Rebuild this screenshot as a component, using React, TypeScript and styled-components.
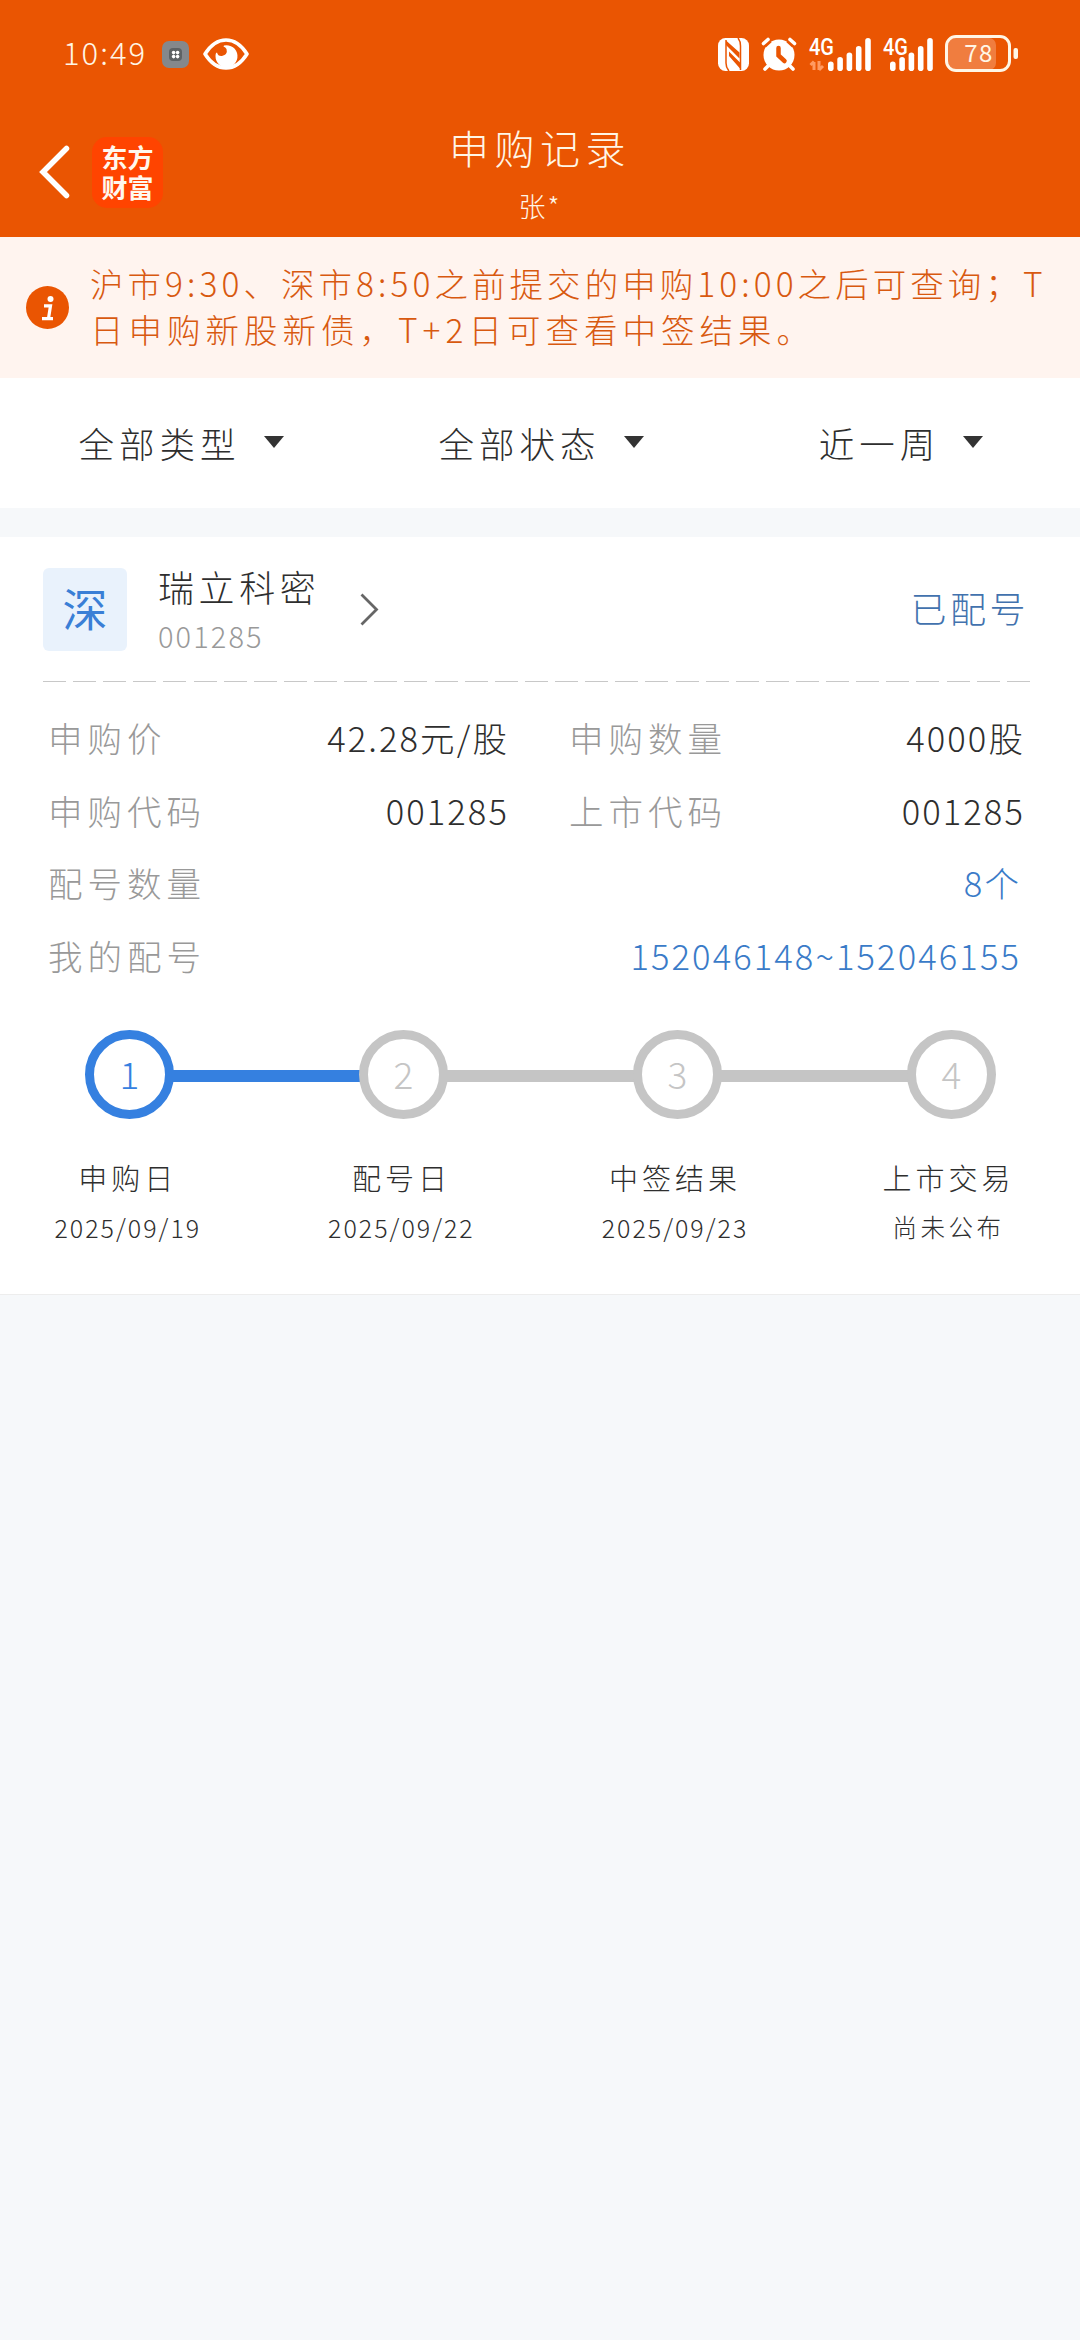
import React from 'react';
import styled, { createGlobalStyle } from 'styled-components';

const ORANGE = '#ea5502';
const BLUE = '#3580e0';
const GREY = '#c5c5c5';

const GlobalStyle = createGlobalStyle`
  * { box-sizing: border-box; }
  body {
    margin: 0;
    background: #f6f8fa;
    color: #2e2e2e;
    font-family: "Noto Sans CJK SC", "Noto Sans", sans-serif;
    font-weight: 300;
  }
`;

const Screen = styled.main`
  width: 1080px;
  min-height: 2340px;
  background: #f6f8fa;
`;

const Header = styled.header`
  height: 237px;
  background: ${ORANGE};
  color: #fff6e6;
`;

const StatusBar = styled.div`
  display: flex;
  justify-content: space-between;
  align-items: center;
  height: 108px;
  padding: 0 61px 0 63px;
`;

const StatusGroup = styled.div`
  display: flex;
  align-items: center;
`;

const Clock = styled.span`
  width: 99px;
  padding-bottom: 4px;
  font-size: 31px;
  line-height: 36px;
  letter-spacing: 2px;
`;

const Gap = styled.span<{ $w: number }>`
  width: ${p => p.$w}px;
`;

const TitleBar = styled.div`
  display: grid;
  grid-template-columns: 300px 1fr 300px;
  height: 129px;
`;

const NavGroup = styled.div`
  display: flex;
  align-items: center;
  gap: 22px;
  height: 128px;
  padding-left: 39px;
`;

const Logo = styled.div`
  display: flex;
  flex-direction: column;
  align-items: center;
  justify-content: center;
  width: 71px;
  height: 71px;
  border-radius: 15px;
  background: #ff4400;
  color: #fff8ee;
  font-size: 26px;
  font-weight: 700;
  line-height: 30px;
`;

const TitleBlock = styled.div`
  display: flex;
  flex-direction: column;
  align-items: center;
  padding-top: 13px;
`;

const Title = styled.h1`
  margin: 0;
  font-size: 40px;
  font-weight: 300;
  line-height: 52px;
  letter-spacing: 5.5px;
`;

const Holder = styled.span`
  margin-top: 11px;
  font-size: 27px;
  line-height: 44px;
  letter-spacing: 2px;
`;

const Notice = styled.section`
  display: flex;
  align-items: center;
  gap: 21px;
  height: 141px;
  padding: 0 20px 0 26px;
  background: #fff4ef;
  color: #d8590f;
`;

const NoticeText = styled.p`
  margin: 0;
  padding-bottom: 3px;
  font-size: 33.5px;
  line-height: 46px;
  white-space: nowrap;
`;

const NoticeLine = styled.span<{ $spacing: number }>`
  display: block;
  letter-spacing: ${p => p.$spacing}px;
`;

const Filters = styled.nav`
  display: grid;
  grid-template-columns: repeat(3, 1fr);
  height: 130px;
  margin-bottom: 29px;
  background: #fff;
`;

const Filter = styled.div`
  display: flex;
  align-items: center;
  justify-content: center;
  gap: 23px;
  padding: 0 0 2px 2px;
  font-size: 35.5px;
  letter-spacing: 5px;
`;

const Caret = styled.span`
  border: 10px solid transparent;
  border-top: 12px solid #333;
  border-bottom: 0;
`;

const Card = styled.section`
  height: 758px;
  padding: 31px 51px 0 43px;
  border-bottom: 1px solid #ededed;
  background: #fff;
`;

const Stock = styled.div`
  display: flex;
  align-items: center;
  height: 83px;
`;

const Market = styled.div`
  display: flex;
  align-items: center;
  justify-content: center;
  width: 84px;
  height: 83px;
  margin-right: 31px;
  padding-bottom: 4px;
  border-radius: 6px;
  background: #e9f2fc;
  color: #3a7fd6;
  font-size: 45px;
  font-weight: 400;
  line-height: 60px;
`;

const StockName = styled.div`
  display: flex;
  flex-direction: column;
  width: 202px;
  font-size: 36px;
  line-height: 50px;
  letter-spacing: 4.6px;
`;

const StockCode = styled.span`
  color: #999;
  font-size: 29px;
  line-height: 48px;
  letter-spacing: 2.1px;
`;

const Allotted = styled.span`
  margin-left: auto;
  padding-bottom: 6px;
  color: #4272ae;
  font-size: 36px;
  letter-spacing: 3.5px;
`;

const Divider = styled.div`
  width: 987px;
  height: 1px;
  margin-top: 30px;
  background: repeating-linear-gradient(90deg, #c8c8c8 0 23px, transparent 23px 30.12px);
`;

const Details = styled.div`
  display: grid;
  grid-template-columns: 459px 454px;
  grid-auto-rows: 72.6px;
  column-gap: 62px;
  padding: 19px 0 0 5px;
  font-size: 34.5px;
`;

const Detail = styled.div<{ $wide?: boolean }>`
  display: flex;
  align-items: center;
  justify-content: space-between;
  grid-column: ${p => (p.$wide ? '1 / -1' : 'auto')};
`;

const Label = styled.span`
  color: #999;
  letter-spacing: 5px;
`;

const Value = styled.span<{ $link?: boolean }>`
  margin-right: ${p => (p.$link ? 2 : -2)}px;
  color: ${p => (p.$link ? '#3a7bc8' : '#2e2e2e')};
  letter-spacing: 2.1px;
`;

const Track = styled.div`
  display: flex;
  align-items: center;
  margin: 39px -10px 0 42px;
`;

const Circle = styled.div<{ $on: boolean }>`
  display: flex;
  flex: none;
  align-items: center;
  justify-content: center;
  width: 89px;
  height: 89px;
  padding-bottom: 3px;
  border: 9px solid ${p => (p.$on ? BLUE : GREY)};
  border-radius: 50%;
  color: ${p => (p.$on ? BLUE : GREY)};
  font-size: 37px;
  line-height: 60px;
`;

const Bar = styled.div<{ $on: boolean }>`
  flex: none;
  width: 187px;
  height: 12px;
  margin: 3px -1px 0;
  background: ${p => (p.$on ? BLUE : GREY)};
`;

const Captions = styled.div`
  display: grid;
  grid-template-columns: repeat(4, 273.6px);
  margin: 34px 0 0 -52px;
`;

const Caption = styled.div`
  display: flex;
  flex-direction: column;
  align-items: center;
  font-size: 29px;
  line-height: 48px;
  letter-spacing: 4px;
`;

const CaptionDate = styled.span<{ $text: boolean }>`
  margin-top: 2px;
  font-size: ${p => (p.$text ? 24.5 : 25)}px;
  letter-spacing: ${p => (p.$text ? 3.5 : 2)}px;
`;

const AppDot = () => (
  <svg width="27" height="27" viewBox="0 0 27 27">
    <rect width="27" height="27" rx="7" fill="#85888b" />
    <rect x="7" y="7" width="13" height="13" rx="4" fill="#5e6264" />
    <g fill="#fff">
      <circle cx="11.6" cy="11.6" r="1.8" />
      <circle cx="15.6" cy="11.6" r="1.8" />
      <circle cx="11.6" cy="15.6" r="1.8" />
      <circle cx="15.6" cy="15.6" r="1.8" />
    </g>
  </svg>
);

const Eye = () => (
  <svg width="46" height="32" viewBox="0 0 46 32">
    <path d="M2 16C8 6.500 15 2 23 2s15 4.500 21 14c-6 9.500-13 14-21 14S8 25.500 2 16Z" fill="none" stroke="#fff" strokeWidth="3.600" strokeLinejoin="round" />
    <path d="M21 7.500A11 11 0 1 1 12.700 16Q13 14.500 14 14.500Q15 18.500 19 18Q25 16.500 23.500 11Q22.500 9 20.500 8.500Z" fill="#fff" />
  </svg>
);

const Nfc = () => (
  <svg width="31" height="33" viewBox="0 0 31 33">
    <rect width="31" height="33" rx="7.500" fill="#fff" />
    <path d="M8 2.500 21.500 14.500V20.500L8 7ZM11 13.500 22 24.500V30.500L11 18Z" fill={ORANGE} />
    <path d="M20 0Q22.500 3 22.500 8V32M11 33Q8 30 8 25V2" fill="none" stroke={ORANGE} strokeWidth="1.500" />
  </svg>
);

const Alarm = () => (
  <svg width="36" height="34" viewBox="0 0 36 34">
    <circle cx="18" cy="18" r="15.500" fill="#fff" />
    <path d="M2.500 6.500 7 2.500M33.500 6.500 29 2.500M8 28l-4 4M28 28l4 4" stroke="#fff" strokeWidth="3.600" strokeLinecap="round" />
    <path d="M4.500 9.500 10 4.500M31.500 9.500 26 4.500" stroke={ORANGE} strokeWidth="1.800" />
    <path d="M17.500 11v7.500l6 5.500" fill="none" stroke={ORANGE} strokeWidth="4.500" strokeLinecap="round" />
  </svg>
);

const SignalSvg = styled.svg`
  overflow: visible;
`;

const Signal = ({ data }: { data?: boolean }) => {
  const start = data ? 19 : 7;
  return (
    <SignalSvg width={data ? 62 : 50} height="34" viewBox={`0 0 ${data ? 62 : 50} 34`}>
      <g fill="#fff">
        {[9.5, 14, 18.5, 25, 33].map((h, i) => (
          <rect key={h} x={start + i * 9.3} y={34 - h} width="5.6" height={h} rx="2.800" />
        ))}
      </g>
      <text x="0" y="17.500" fill="#fff" stroke={ORANGE} strokeWidth="2" paintOrder="stroke" fontFamily="Roboto, sans-serif" fontSize="23" fontWeight="500" textLength="25" lengthAdjust="spacingAndGlyphs">4G</text>
      {data && <path d="M5 33V25M1.500 28 5 24.500M10 24v9M10 33l4-4" stroke="#ff9a62" strokeWidth="3" fill="none" />}
    </SignalSvg>
  );
};

const Battery = () => (
  <svg width="74" height="38" viewBox="0 0 74 38">
    <rect x="3" y="3" width="48" height="32" rx="7" fill="#f07d3f" />
    <rect x="1.500" y="1.500" width="63" height="34" rx="9.500" fill="none" stroke="#fff6e6" strokeWidth="3" />
    <rect x="68.500" y="13" width="4.500" height="11" rx="2" fill="#fff6e6" />
    <text x="34" y="27" textAnchor="middle" fill="#fff6e6" fontFamily="Noto Sans CJK SC, sans-serif" fontSize="24" fontWeight="400" letterSpacing="1.500">78</text>
  </svg>
);

const Back = () => (
  <svg width="31" height="54" viewBox="0 0 31 54">
    <path d="M27.500 3.500 4 27l23.500 23.500" fill="none" stroke="#fff" strokeWidth="5.500" strokeLinecap="round" />
  </svg>
);

const Info = () => (
  <svg width="43" height="43" viewBox="0 0 43 43">
    <circle cx="21.500" cy="21.500" r="21.500" fill={ORANGE} />
    <circle cx="24.500" cy="13" r="3" fill="#fff" />
    <path d="M18 19.800h6.500L22.500 32.500M16 32.700h11" fill="none" stroke="#fff" strokeWidth="3.200" />
  </svg>
);

const Chevron = () => (
  <svg width="19" height="33" viewBox="0 0 19 33">
    <path d="M1.500 1.500 16.500 16.500 1.500 31.500" fill="none" stroke="#666" strokeWidth="2.800" />
  </svg>
);

const filters = ['全部类型', '全部状态', '近一周'];

const details = [
  { label: '申购价', value: '42.28元/股' },
  { label: '申购数量', value: '4000股' },
  { label: '申购代码', value: '001285' },
  { label: '上市代码', value: '001285' },
  { label: '配号数量', value: '8个', wide: true },
  { label: '我的配号', value: '152046148~152046155', wide: true },
];

const steps = [
  { name: '申购日', date: '2025/09/19', done: true },
  { name: '配号日', date: '2025/09/22', done: false },
  { name: '中签结果', date: '2025/09/23', done: false },
  { name: '上市交易', date: '尚未公布', done: false },
];

export default function App() {
  return (
    <>
      <GlobalStyle />
      <Screen>
        <Header>
          <StatusBar>
            <StatusGroup>
              <Clock>10:49</Clock>
              <AppDot />
              <Gap $w={14} />
              <Eye />
            </StatusGroup>
            <StatusGroup>
              <Nfc />
              <Gap $w={12} />
              <Alarm />
              <Gap $w={12} />
              <Signal data />
              <Gap $w={12} />
              <Signal />
              <Gap $w={12} />
              <Battery />
            </StatusGroup>
          </StatusBar>
          <TitleBar>
            <NavGroup>
              <Back />
              <Logo>
                <span>东方</span>
                <span>财富</span>
              </Logo>
            </NavGroup>
            <TitleBlock>
              <Title>申购记录</Title>
              <Holder>张*</Holder>
            </TitleBlock>
          </TitleBar>
        </Header>

        <Notice>
          <Info />
          <NoticeText>
            <NoticeLine $spacing={4.05}>沪市9:30、深市8:50之前提交的申购10:00之后可查询；T</NoticeLine>
            <NoticeLine $spacing={5}>日申购新股新债，T+2日可查看中签结果。</NoticeLine>
          </NoticeText>
        </Notice>

        <Filters>
          {filters.map(name => (
            <Filter key={name}>
              {name}
              <Caret />
            </Filter>
          ))}
        </Filters>

        <Card>
          <Stock>
            <Market>深</Market>
            <StockName>
              瑞立科密
              <StockCode>001285</StockCode>
            </StockName>
            <Chevron />
            <Allotted>已配号</Allotted>
          </Stock>
          <Divider />
          <Details>
            {details.map(d => (
              <Detail key={d.label} $wide={d.wide}>
                <Label>{d.label}</Label>
                <Value $link={d.wide}>{d.value}</Value>
              </Detail>
            ))}
          </Details>
          <Track>
            {steps.map((s, i) => (
              <React.Fragment key={s.name}>
                {i > 0 && <Bar $on={steps[i - 1].done} />}
                <Circle $on={s.done}>{i + 1}</Circle>
              </React.Fragment>
            ))}
          </Track>
          <Captions>
            {steps.map(s => (
              <Caption key={s.name}>
                {s.name}
                <CaptionDate $text={!s.date.includes('/')}>{s.date}</CaptionDate>
              </Caption>
            ))}
          </Captions>
        </Card>
      </Screen>
    </>
  );
}
